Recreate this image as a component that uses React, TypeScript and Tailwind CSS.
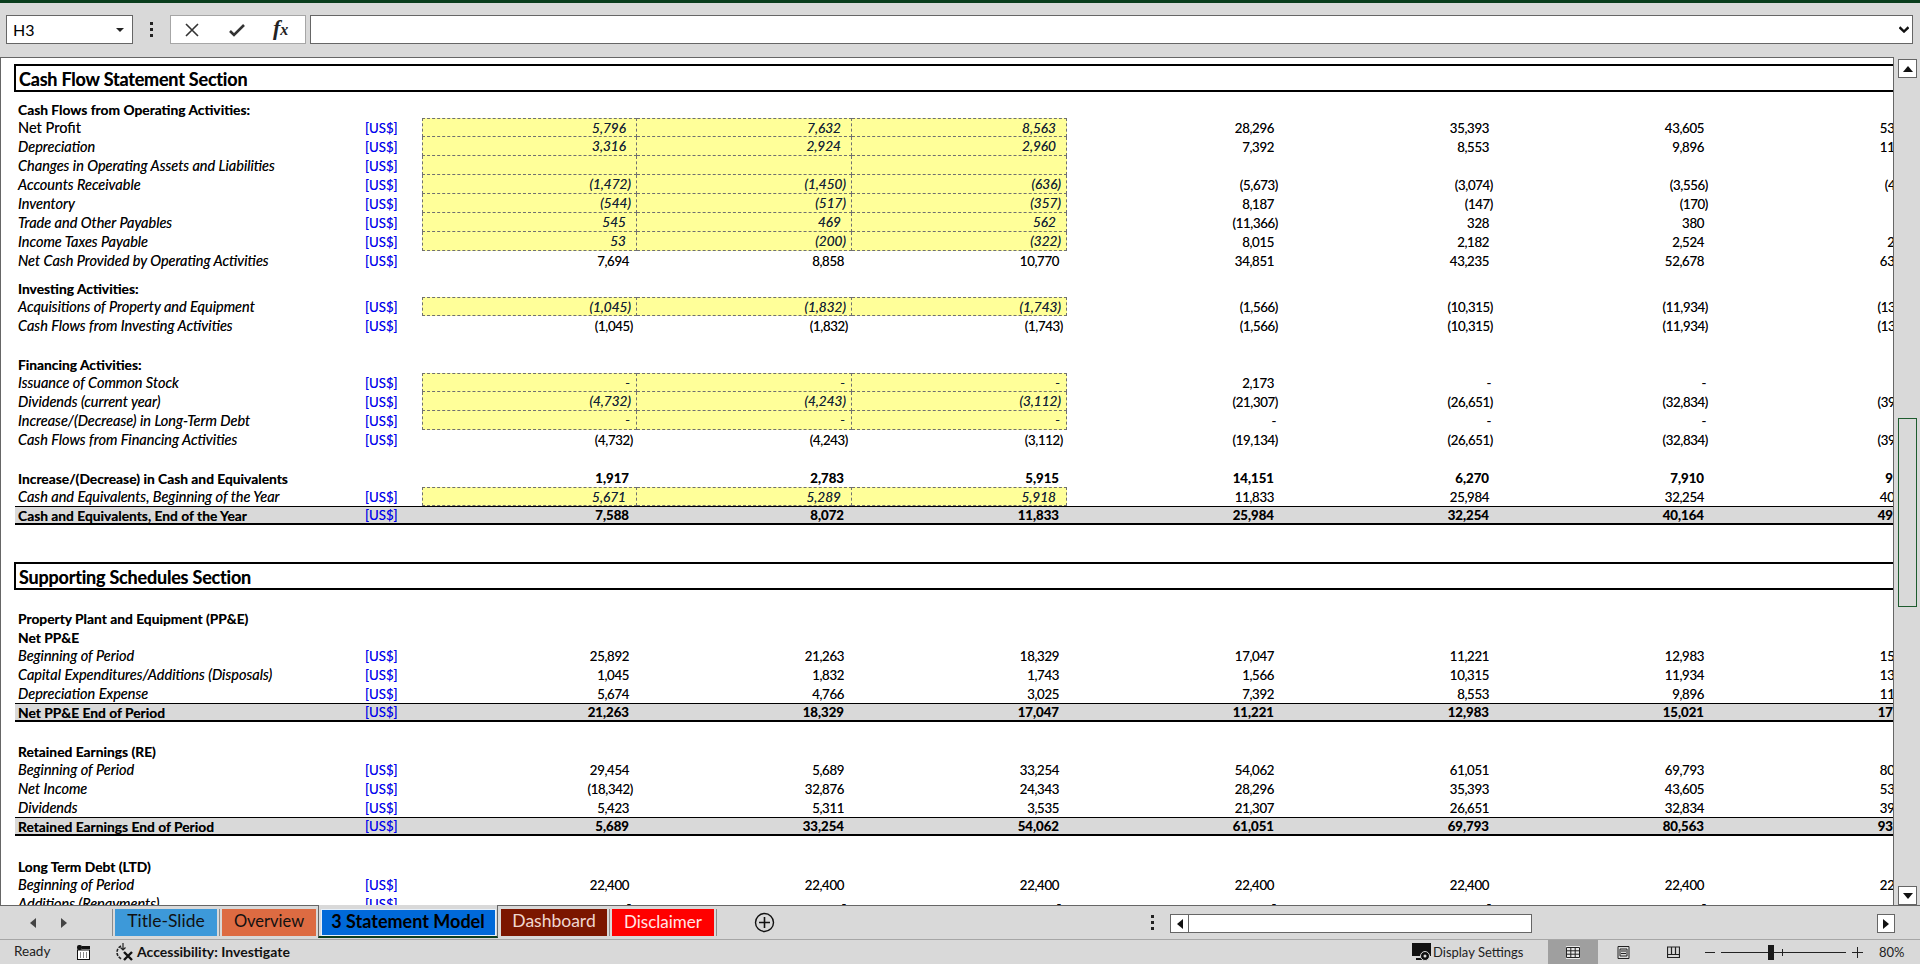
import React from "react";

type Kind = "bold" | "italic" | "plain" | "total";
type R = {
  h?: number;
  label?: string;
  kind?: Kind;
  unit?: boolean;
  vals?: string[];
  yellow?: boolean;
  first?: boolean;
  valBold?: boolean;
};

const rows1: R[] = [
  { label: "Cash Flows from Operating Activities:", kind: "bold" },
  { label: "Net Profit", kind: "plain", unit: true, yellow: true, first: true, vals: ["5,796", "7,632", "8,563", "28,296", "35,393", "43,605", "53,468"] },
  { label: "Depreciation", kind: "italic", unit: true, yellow: true, vals: ["3,316", "2,924", "2,960", "7,392", "8,553", "9,896", "11,240"] },
  { label: "Changes in Operating Assets and Liabilities", kind: "italic", unit: true, yellow: true, vals: ["", "", "", "", "", "", ""] },
  { label: "Accounts Receivable", kind: "italic", unit: true, yellow: true, vals: ["(1,472)", "(1,450)", "(636)", "(5,673)", "(3,074)", "(3,556)", "(4,322)"] },
  { label: "Inventory", kind: "italic", unit: true, yellow: true, vals: ["(544)", "(517)", "(357)", "8,187", "(147)", "(170)", "(206)"] },
  { label: "Trade and Other Payables", kind: "italic", unit: true, yellow: true, vals: ["545", "469", "562", "(11,366)", "328", "380", "462"] },
  { label: "Income Taxes Payable", kind: "italic", unit: true, yellow: true, vals: ["53", "(200)", "(322)", "8,015", "2,182", "2,524", "2,980"] },
  { label: "Net Cash Provided by Operating Activities", kind: "italic", unit: true, vals: ["7,694", "8,858", "10,770", "34,851", "43,235", "52,678", "63,622"] },
  { h: 8 },
  { label: "Investing Activities:", kind: "bold" },
  { label: "Acquisitions of Property and Equipment", kind: "italic", unit: true, yellow: true, first: true, vals: ["(1,045)", "(1,832)", "(1,743)", "(1,566)", "(10,315)", "(11,934)", "(13,512)"] },
  { label: "Cash Flows from Investing Activities", kind: "italic", unit: true, vals: ["(1,045)", "(1,832)", "(1,743)", "(1,566)", "(10,315)", "(11,934)", "(13,512)"] },
  { h: 19 },
  { label: "Financing Activities:", kind: "bold" },
  { label: "Issuance of Common Stock", kind: "italic", unit: true, yellow: true, first: true, vals: ["-", "-", "-", "2,173", "-", "-", ""] },
  { label: "Dividends (current year)", kind: "italic", unit: true, yellow: true, vals: ["(4,732)", "(4,243)", "(3,112)", "(21,307)", "(26,651)", "(32,834)", "(39,994)"] },
  { label: "Increase/(Decrease) in Long-Term Debt", kind: "italic", unit: true, yellow: true, vals: ["-", "-", "-", "-", "-", "-", ""] },
  { label: "Cash Flows from Financing Activities", kind: "italic", unit: true, vals: ["(4,732)", "(4,243)", "(3,112)", "(19,134)", "(26,651)", "(32,834)", "(39,994)"] },
  { h: 19 },
  { label: "Increase/(Decrease) in Cash and Equivalents", kind: "bold", valBold: true, vals: ["1,917", "2,783", "5,915", "14,151", "6,270", "7,910", "9,116"] },
  { label: "Cash and Equivalents, Beginning of the Year", kind: "italic", unit: true, yellow: true, first: true, vals: ["5,671", "5,289", "5,918", "11,833", "25,984", "32,254", "40,164"] },
  { label: "Cash and Equivalents, End of the Year", kind: "total", unit: true, vals: ["7,588", "8,072", "11,833", "25,984", "32,254", "40,164", "49,280"] },
];

const rows2: R[] = [
  { label: "Property Plant and Equipment (PP&E)", kind: "bold" },
  { label: "Net PP&E", kind: "bold" },
  { label: "Beginning of Period", kind: "italic", unit: true, vals: ["25,892", "21,263", "18,329", "17,047", "11,221", "12,983", "15,021"] },
  { label: "Capital Expenditures/Additions (Disposals)", kind: "italic", unit: true, vals: ["1,045", "1,832", "1,743", "1,566", "10,315", "11,934", "13,512"] },
  { label: "Depreciation Expense", kind: "italic", unit: true, vals: ["5,674", "4,766", "3,025", "7,392", "8,553", "9,896", "11,240"] },
  { label: "Net PP&E End of Period", kind: "total", unit: true, vals: ["21,263", "18,329", "17,047", "11,221", "12,983", "15,021", "17,293"] },
  { h: 19 },
  { label: "Retained Earnings (RE)", kind: "bold" },
  { label: "Beginning of Period", kind: "italic", unit: true, vals: ["29,454", "5,689", "33,254", "54,062", "61,051", "69,793", "80,563"] },
  { label: "Net Income", kind: "italic", unit: true, vals: ["(18,342)", "32,876", "24,343", "28,296", "35,393", "43,605", "53,468"] },
  { label: "Dividends", kind: "italic", unit: true, vals: ["5,423", "5,311", "3,535", "21,307", "26,651", "32,834", "39,994"] },
  { label: "Retained Earnings End of Period", kind: "total", unit: true, vals: ["5,689", "33,254", "54,062", "61,051", "69,793", "80,563", "93,037"] },
  { h: 20 },
  { label: "Long Term Debt (LTD)", kind: "bold" },
  { label: "Beginning of Period", kind: "italic", unit: true, vals: ["22,400", "22,400", "22,400", "22,400", "22,400", "22,400", "22,400"] },
  { label: "Additions (Repayments)", kind: "italic", unit: true, vals: ["-", "-", "-", "-", "-", "-", "-"] },
];

function padClass(v: string, italicCell: boolean) {
  if (v.endsWith(")")) return italicCell ? "pr-[5px]" : "pr-[4px]";
  if (v === "-") return "pr-[6px]";
  return italicCell ? "pr-[10px]" : "pr-[8px]";
}

function Row({ r }: { r: R }) {
  if (r.h) return <div className="flex-none" style={{ height: r.h }} />;
  const total = r.kind === "total";
  const labelClass =
    r.kind === "bold" || total
      ? "font-bold text-[13.8px]"
      : r.kind === "italic"
        ? "italic text-[14.5px]"
        : "text-[14.6px]";
  return (
    <div
      className={
        total
          ? "ml-[14px] flex h-[19px] w-[1912px] flex-none items-center border-t border-b-2 border-black bg-[#d9d9d9]"
          : "ml-[14px] flex h-[19px] w-[1912px] flex-none items-center"
      }
    >
      <div className={"w-[350px] flex-none whitespace-nowrap pl-[3px] pt-[2px] text-black " + labelClass}>{r.label}</div>
      <div className="w-[57px] flex-none pt-[2px] text-[#0000ff]">{r.unit ? "[US$]" : ""}</div>
      {(r.vals ?? ["", "", "", "", "", "", ""]).map((v, i) => {
        const y = !!r.yellow && i < 3;
        const bold = total || r.valBold;
        return (
          <div
            key={i}
            className={[
              "flex h-full w-[215px] flex-none items-center justify-end whitespace-nowrap pt-[2px]",
              padClass(v, y),
              y
                ? "border-r border-b border-dashed border-[#707070] bg-[#ffff99] text-[13.6px] italic text-[#0f2238]"
                : "text-black",
              y && i === 0 ? "border-l" : "",
              y && r.first ? "border-t" : "",
              bold ? "font-bold" : y ? "" : "tracking-[-0.35px]",
            ].join(" ")}
          >
            {v}
          </div>
        );
      })}
    </div>
  );
}

function SectionTitle({ children }: { children: React.ReactNode }) {
  return (
    <div className="ml-[13px] flex h-[28px] w-[1920px] flex-none items-center border-2 border-black pl-[3px] pt-[2px] text-[18px] font-bold tracking-[-0.2px] text-black">
      {children}
    </div>
  );
}

function ScrollBtn({ children }: { children: React.ReactNode }) {
  return (
    <div className="flex h-[19px] w-[19px] flex-none items-center justify-center border border-[#666] bg-white">
      {children}
    </div>
  );
}

const Sep = () => <div className="h-[27px] w-px flex-none bg-[#8c8c8c]" />;

function Tab({ label, cls }: { label: string; cls: string }) {
  return <div className={"flex h-[27px] flex-none items-center justify-center pb-[3px] " + cls}>{label}</div>;
}

export default function App() {
  return (
    <div className="flex h-[966px] w-[1920px] flex-col overflow-hidden bg-white text-[13.2px] leading-none [font-family:Lato,sans-serif]">
      <div className="h-[3px] flex-none bg-[#0a3d1c]" />

      {/* Formula bar */}
      <div className="flex h-[54px] flex-none items-start bg-[#d9d9d9] pt-[12px]">
        <div className="ml-[6px] flex h-[29px] w-[127px] flex-none items-center justify-between border border-[#666] bg-white pl-[6px] pr-[7px] text-[16px] text-black">
          <span>H3</span>
          <svg width="10" height="6" viewBox="0 0 10 6"><path d="M1 1h8L5 5z" fill="#222" /></svg>
        </div>
        <div className="ml-[16px] flex h-[29px] w-[4px] flex-none flex-col items-center justify-center gap-[3px]">
          <div className="h-[3px] w-[3px] bg-[#222]" />
          <div className="h-[3px] w-[3px] bg-[#222]" />
          <div className="h-[3px] w-[3px] bg-[#222]" />
        </div>
        <div className="ml-[17px] flex h-[29px] w-[136px] flex-none items-center border border-[#a6a6a6] bg-white pl-[14px]">
          <svg width="14" height="14" viewBox="0 0 14 14"><path d="M1 1l12 12M13 1L1 13" stroke="#333" strokeWidth="1.6" fill="none" /></svg>
          <svg className="ml-[30px]" width="16" height="14" viewBox="0 0 16 14"><path d="M1 8l4 4L15 2" stroke="#333" strokeWidth="2.6" fill="none" /></svg>
          <span className="ml-[28px] -mt-[3px] flex items-baseline font-bold italic text-[#222] [font-family:'Liberation_Serif',serif]">
            <span className="text-[22px]">f</span>
            <span className="text-[16px]">x</span>
          </span>
        </div>
        <div className="ml-[4px] flex h-[29px] w-[1603px] flex-none items-center justify-end border border-[#666] bg-white pr-[3px]">
          <svg width="10" height="7" viewBox="0 0 10 7"><path d="M0.5 1.2L5 5.5l4.5-4.3" stroke="#111" strokeWidth="2.4" fill="none" /></svg>
        </div>
      </div>

      {/* Sheet + vertical scrollbar */}
      <div className="flex h-[848px] flex-none">
        <div className="flex h-full w-[1894px] flex-none flex-col overflow-hidden border-x border-t border-[#666] bg-white pt-[6px] [text-shadow:0_0_0.5px_rgba(0,0,0,0.55)]">
          <SectionTitle>Cash Flow Statement Section</SectionTitle>
          <div className="h-[7px] flex-none" />
          {rows1.map((r, i) => <Row key={i} r={r} />)}
          <div className="h-[37px] flex-none" />
          <SectionTitle>Supporting Schedules Section</SectionTitle>
          <div className="h-[18px] flex-none" />
          {rows2.map((r, i) => <Row key={i} r={r} />)}
        </div>
        <div className="flex h-full w-[26px] flex-none flex-col bg-[#d9d9d9] pl-[4px] pt-[2px]">
          <ScrollBtn>
            <svg width="10" height="6" viewBox="0 0 10 6"><path d="M5 0l5 6H0z" fill="#111" /></svg>
          </ScrollBtn>
          <div className="mt-[340px] h-[189px] w-[19px] flex-none border border-[#1e5c2e] bg-[#d9d9d9]" />
          <div className="flex-1" />
          <ScrollBtn>
            <svg width="10" height="6" viewBox="0 0 10 6"><path d="M5 6l5-6H0z" fill="#111" /></svg>
          </ScrollBtn>
        </div>
      </div>

      {/* Tab bar */}
      <div className="relative flex h-[34px] flex-none items-start border-t border-[#666] bg-[#d9d9d9] pt-[3px]">
        <svg className="ml-[30px] mt-[9px]" width="6" height="10" viewBox="0 0 6 10"><path d="M6 0v10L0 5z" fill="#444" /></svg>
        <svg className="ml-[25px] mt-[9px]" width="6" height="10" viewBox="0 0 6 10"><path d="M0 0v10l6-5z" fill="#444" /></svg>
        <div className="ml-[45px]"><Sep /></div>
        <Tab label="Title-Slide" cls="ml-[2px] w-[102px] bg-[#3d99d9] text-[17.5px] text-[#111]" />
        <div className="ml-[2px]"><Sep /></div>
        <Tab label="Overview" cls="ml-[2px] w-[94px] bg-[#dd6b42] text-[16.5px] text-[#111]" />
        <div className="-mt-[4px] ml-[2px] flex h-[33px] w-[180px] flex-none items-start justify-center border-x border-b-2 border-x-[#666] border-b-[#0a3d1c] bg-[#d9d9d9] pt-[4px]">
          <div className="flex h-[27px] w-[175px] items-center justify-center border border-[#e6f0fa] bg-[#0069d9] pb-[3px] text-[18px] font-bold text-black">3 Statement Model</div>
        </div>
        <Tab label="Dashboard" cls="ml-[3px] w-[106px] bg-[#7b1600] text-[17.5px] text-[#f0d8d0]" />
        <div className="ml-[2px]"><Sep /></div>
        <Tab label="Disclaimer" cls="ml-[2px] w-[102px] bg-[#ff0000] text-[17px] text-[#ffe6e6]" />
        <div className="ml-[2px]"><Sep /></div>
        <svg className="ml-[37px] mt-[3px]" width="21" height="21" viewBox="0 0 21 21">
          <circle cx="10.5" cy="10.5" r="9" stroke="#111" strokeWidth="1.4" fill="none" />
          <path d="M10.5 5v11M5 10.5h11" stroke="#111" strokeWidth="1.6" />
        </svg>
        <div className="ml-[376px] mt-[6px] flex flex-col gap-[3px]">
          <div className="h-[3px] w-[3px] bg-[#222]" />
          <div className="h-[3px] w-[3px] bg-[#222]" />
          <div className="h-[3px] w-[3px] bg-[#222]" />
        </div>
        <div className="ml-[16px] mt-[5px] flex h-[19px] w-[362px] flex-none border border-[#666] bg-white">
          <div className="flex h-full w-[18px] items-center justify-center border-r border-[#666]">
            <svg width="6" height="10" viewBox="0 0 6 10"><path d="M6 0v10L0 5z" fill="#111" /></svg>
          </div>
        </div>
        <div className="ml-[345px] mt-[5px] flex h-[19px] w-[18px] flex-none items-center justify-center border border-[#666] bg-white">
          <svg width="6" height="10" viewBox="0 0 6 10"><path d="M0 0v10l6-5z" fill="#111" /></svg>
        </div>
      </div>

      {/* Status bar */}
      <div className="flex h-[25px] flex-none items-center border-t border-[#a6a6a6] bg-[#d9d9d9] text-[13px] text-[#222]">
        <span className="ml-[14px] w-[36px] text-[13.5px]">Ready</span>
        <svg className="ml-[26px]" width="15" height="15" viewBox="0 0 15 15">
          <rect x="1" y="0" width="5" height="5" rx="2" fill="#111" />
          <rect x="6" y="1" width="8" height="3" fill="#111" />
          <rect x="1.5" y="5" width="12" height="9.5" fill="#fff" stroke="#111" />
          <path d="M4 8h1M7 8h1M10 8h1M4 10h1M7 10h1M10 10h1M4 12h1M7 12h1M10 12h1" stroke="#111" />
        </svg>
        <svg className="ml-[24px]" width="20" height="20" viewBox="0 0 20 20">
          <path d="M6 4a7 7 0 0 0 1 13" stroke="#222" strokeWidth="1.6" fill="none" strokeDasharray="3 1.2" />
          <path d="M8 1v7M5.500 5.500L8 8l2.500-2.500" stroke="#222" strokeWidth="1.2" fill="none" />
          <path d="M9 10l8 8M17 10l-8 8" stroke="#111" strokeWidth="2.4" fill="none" />
        </svg>
        <span className="ml-[2px] w-[153px] whitespace-nowrap text-[14px] font-bold text-[#111]">Accessibility: Investigate</span>
        <svg className="ml-[1122px]" width="20" height="20" viewBox="0 0 20 20">
          <rect x="0" y="1" width="19" height="13" fill="#111" />
          <path d="M4 17h6" stroke="#111" strokeWidth="2" />
          <circle cx="13" cy="14" r="4.5" fill="#111" stroke="#d9d9d9" />
          <circle cx="13" cy="14" r="1.5" fill="#d9d9d9" />
        </svg>
        <span className="ml-[1px] w-[95px] whitespace-nowrap">Display Settings</span>
        <div className="ml-[20px] flex h-full w-[50px] flex-none items-center justify-center bg-[#9f9f9f]">
          <svg width="14" height="13" viewBox="0 0 14 13" className="bg-[#e8e8e8]">
            <path d="M0.5 1.5h13v10h-13zM0.5 4.8h13M0.5 8.2h13M4.8 1.5v10M9.2 1.5v10" stroke="#222" fill="none" />
          </svg>
        </div>
        <svg className="ml-[19px]" width="13" height="13" viewBox="0 0 13 13">
          <path d="M1 .5h11v12H1zM3 3h7v7H3zM4 5h5M4 7.500h5" stroke="#222" fill="none" />
        </svg>
        <svg className="ml-[37px]" width="13" height="13" viewBox="0 0 13 13">
          <path d="M.5 1h12v10.500H.5zM.5 8.500h12M4.500 1v7.500M8.500 1v7.500" stroke="#222" fill="none" strokeWidth="1.2" />
        </svg>
        <div className="ml-[25px] h-px w-[10px] flex-none bg-[#222]" />
        <div className="relative ml-[6px] h-px w-[125px] flex-none bg-[#222]">
          <div className="absolute -top-[7px] left-[47px] h-[15px] w-[6px] bg-[#1a1a1a]" />
          <div className="absolute -top-[3px] left-[61px] h-[7px] w-px bg-[#222]" />
        </div>
        <svg className="ml-[6px]" width="11" height="11" viewBox="0 0 11 11"><path d="M5.500 0v11M0 5.500h11" stroke="#222" /></svg>
        <span className="ml-[16px]">80%</span>
      </div>
      <div className="h-[2px] flex-none bg-white" />
    </div>
  );
}
